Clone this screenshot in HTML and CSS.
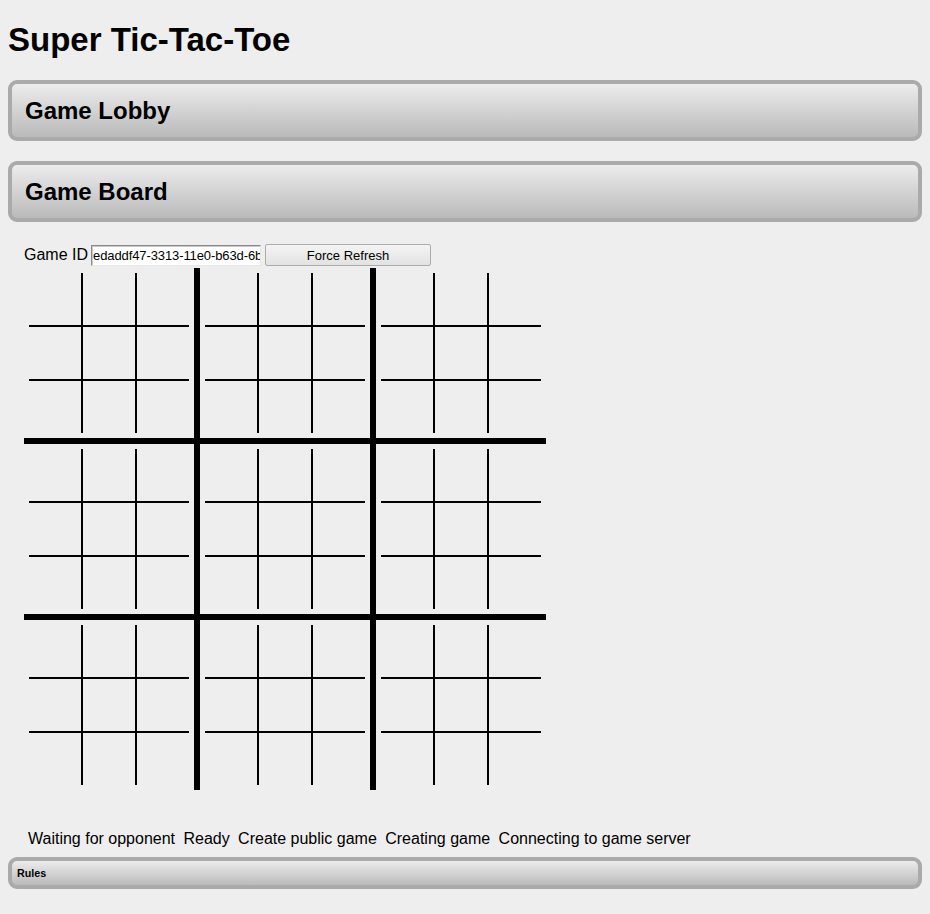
FILE: index.html
```html
<!DOCTYPE html>
<html>
<head>
<meta charset="utf-8">
<title>Super Tic-Tac-Toe</title>
<link rel="stylesheet" href="styles.css">
</head>
<body>
<h1 class="title">Super Tic-Tac-Toe</h1>

<section class="panel">
  <h2 class="panel-title">Game Lobby</h2>
</section>

<section class="panel">
  <h2 class="panel-title">Game Board</h2>
</section>

<div class="board-area">
  <div class="id-row">
    <label class="id-label" for="gameid">Game ID</label>
    <input class="id-input" id="gameid" type="text" value="edaddf47-3313-11e0-b63d-6b2f4a91c0de">
    <button class="refresh-btn" type="button">Force Refresh</button>
  </div>

  <svg class="board" width="522" height="522" viewBox="0 0 522 522" xmlns="http://www.w3.org/2000/svg">
    <defs>
      <g id="sub" stroke="#000" stroke-width="2">
        <line x1="58" y1="5" x2="58" y2="165"/>
        <line x1="112" y1="5" x2="112" y2="165"/>
        <line x1="5" y1="58" x2="165" y2="58"/>
        <line x1="5" y1="112" x2="165" y2="112"/>
      </g>
    </defs>
    <use href="#sub" x="0" y="0"/>
    <use href="#sub" x="176" y="0"/>
    <use href="#sub" x="352" y="0"/>
    <use href="#sub" x="0" y="176"/>
    <use href="#sub" x="176" y="176"/>
    <use href="#sub" x="352" y="176"/>
    <use href="#sub" x="0" y="352"/>
    <use href="#sub" x="176" y="352"/>
    <use href="#sub" x="352" y="352"/>
    <rect x="170" y="0" width="6" height="522" fill="#000"/>
    <rect x="346" y="0" width="6" height="522" fill="#000"/>
    <rect x="0" y="170" width="522" height="6" fill="#000"/>
    <rect x="0" y="346" width="522" height="6" fill="#000"/>
  </svg>

  <div class="status">
    <span class="status-item">Waiting for opponent</span>
    <span class="status-item">Ready</span>
    <span class="status-item">Create public game</span>
    <span class="status-item">Creating game</span>
    <span class="status-item">Connecting to game server</span>
  </div>
</div>

<section class="panel panel-small">
  <h6 class="panel-title-small">Rules</h6>
</section>
</body>
</html>
```

FILE: styles.css
```css
html {
  background: #eeeeee;
}

body {
  margin: 0;
  padding: 0 8px 8px;
  background: #eeeeee;
  color: #000;
  font-family: "Liberation Sans", Arial, sans-serif;
  font-size: 16px;
}

.title {
  font-size: 33px;
  line-height: 38px;
  font-weight: bold;
  margin: 0;
  padding: 21px 0;
}

.panel {
  border: 4px solid #aaaaaa;
  border-radius: 9px;
  background: linear-gradient(#ececec, #bababa);
  margin: 0 0 20px;
}

.panel-title {
  margin: 0;
  padding: 13px;
  font-size: 24px;
  line-height: 27px;
  font-weight: bold;
}

.board-area {
  padding-left: 16px;
  padding-top: 2px;
}

.id-row {
  display: flex;
  align-items: center;
  height: 22px;
}

.id-label {
  font-size: 16px;
  margin-right: 3px;
}

.id-input {
  box-sizing: border-box;
  width: 170px;
  height: 21px;
  margin: 0 4px 0 0;
  padding: 0 0 0 1px;
  border-style: solid;
  border-width: 1px;
  border-color: #8a8a8a #e6e6e6 #e6e6e6 #8a8a8a;
  box-shadow: inset 1px 1px 0 #c8c8c8;
  background: #fff;
  font-family: "Liberation Sans", Arial, sans-serif;
  font-size: 13px;
  letter-spacing: -0.1px;
  color: #000;
  outline: none;
}

.refresh-btn {
  box-sizing: border-box;
  width: 166px;
  height: 22px;
  margin: 0;
  padding: 0;
  border: 1px solid #acacac;
  border-radius: 2px;
  background: linear-gradient(#f4f4f4, #e2e2e2);
  font-family: "Liberation Sans", Arial, sans-serif;
  font-size: 13px;
  color: #000;
}

.board {
  display: block;
  margin-top: 2px;
}

.status {
  display: flex;
  gap: 8.4px;
  padding-left: 4px;
  margin: 40px 0 9px;
  line-height: 18px;
  font-size: 16px;
}

.panel-small {
  border-radius: 9px;
  margin-bottom: 0;
}

.panel-title-small {
  margin: 0;
  padding: 6px 5px;
  font-size: 10.72px;
  line-height: 12px;
  font-weight: bold;
}
```
